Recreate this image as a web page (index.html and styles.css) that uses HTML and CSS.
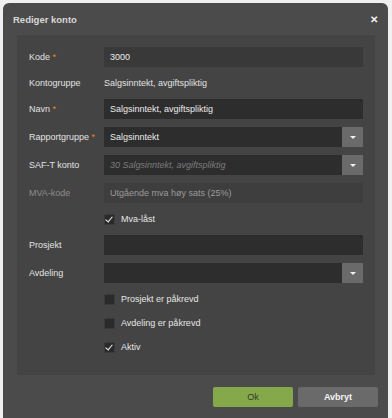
FILE: index.html
```html
<!DOCTYPE html>
<html lang="nb">
<head>
    <meta charset="UTF-8">
    <meta name="viewport" content="width=device-width, initial-scale=1.0">
    <title>Rediger konto</title>
    <link rel="stylesheet" href="styles.css">
</head>
<body>
    <div class="dialog">
        <header class="dialog-header">
            <h1>Rediger konto</h1>
            <span class="close">&#10005;</span>
        </header>
        <div class="panel">
            <div class="row">
                <label>Kode <span class="req">*</span></label>
                <div class="field readonly">3000</div>
            </div>
            <div class="row short">
                <label>Kontogruppe</label>
                <div class="value">Salgsinntekt, avgiftspliktig</div>
            </div>
            <div class="row">
                <label>Navn <span class="req">*</span></label>
                <div class="field">Salgsinntekt, avgiftspliktig</div>
            </div>
            <div class="row">
                <label>Rapportgruppe <span class="req">*</span></label>
                <div class="select">
                    <div class="field">Salgsinntekt</div>
                    <span class="caret"></span>
                </div>
            </div>
            <div class="row">
                <label>SAF-T konto</label>
                <div class="select">
                    <div class="field placeholder">30 Salgsinntekt, avgiftspliktig</div>
                    <span class="caret"></span>
                </div>
            </div>
            <div class="row">
                <label class="dim">MVA-kode</label>
                <div class="field disabled">Utgående mva høy sats (25%)</div>
            </div>
            <div class="row short">
                <label></label>
                <div class="check"><span class="box checked"></span>Mva-låst</div>
            </div>
            <div class="row">
                <label>Prosjekt</label>
                <div class="field"></div>
            </div>
            <div class="row">
                <label>Avdeling</label>
                <div class="select">
                    <div class="field"></div>
                    <span class="caret"></span>
                </div>
            </div>
            <div class="row short">
                <label></label>
                <div class="check"><span class="box"></span>Prosjekt er påkrevd</div>
            </div>
            <div class="row short">
                <label></label>
                <div class="check"><span class="box"></span>Avdeling er påkrevd</div>
            </div>
            <div class="row short">
                <label></label>
                <div class="check"><span class="box checked"></span>Aktiv</div>
            </div>
        </div>
        <footer class="dialog-footer">
            <button class="btn ok">Ok</button>
            <button class="btn cancel">Avbryt</button>
        </footer>
    </div>
</body>
</html>
```

FILE: styles.css
```css
body {
    background-color: #f0f0f0;
    font-family: 'Liberation Sans', Arial, sans-serif;
    font-size: 9px;
    margin: 0;
    padding: 3px 4px 0 3px;
    height: 415px;
    overflow: hidden;
}
.dialog {
    background-color: #4b4b4b;
    border-radius: 6px 6px 0 0;
    height: 420px;
    padding: 0 13px 0 14px;
}
.dialog-header {
    height: 32px;
    display: flex;
    align-items: center;
    justify-content: space-between;
    margin: 0 -13px 0 -4px;
    padding-right: 10px;
}
.dialog-header h1 {
    color: #d8d8d8;
    font-size: 9.5px;
    font-weight: bold;
    margin: 0;
    padding-top: 1px;
}
.close {
    color: #f2f2f2;
    font-size: 10px;
    font-weight: bold;
}
.panel {
    background-color: #444444;
    padding: 12px 12px 20px 12px;
    display: flex;
    flex-direction: column;
    gap: 8px;
}
.row {
    display: flex;
    align-items: center;
    height: 20px;
}
.row.short {
    height: 16px;
}
.row label {
    width: 75px;
    flex-shrink: 0;
    color: #e2e2e2;
}
.row label.dim {
    color: #8c8c8c;
}
.req {
    color: #e8872a;
}
.field {
    flex: 1;
    height: 20px;
    line-height: 20px;
    background-color: #2d2d2d;
    color: #ececec;
    padding: 0 6px;
    box-sizing: border-box;
    white-space: nowrap;
    overflow: hidden;
}
.field.readonly {
    background-color: #393939;
}
.field.disabled {
    background-color: #3e3e3e;
    color: #9a9a9a;
}
.field.placeholder {
    color: #7c7c7c;
    font-style: italic;
}
.value {
    color: #e2e2e2;
}
.select {
    flex: 1;
    display: flex;
}
.caret {
    width: 21px;
    height: 20px;
    background-color: #6a6a6a;
    position: relative;
}
.caret::after {
    content: '';
    position: absolute;
    left: 8px;
    top: 9px;
    border-left: 3px solid transparent;
    border-right: 3px solid transparent;
    border-top: 3px solid #f0f0f0;
}
.check {
    display: flex;
    align-items: center;
    color: #e6e6e6;
}
.box {
    width: 9px;
    height: 9px;
    background-color: #2a2a2a;
    border: 1px solid #3a3a3a;
    margin-right: 6px;
    position: relative;
}
.box.checked::after {
    content: '';
    position: absolute;
    left: 2px;
    top: 0px;
    width: 3px;
    height: 6px;
    border-right: 1.5px solid #f4f4f4;
    border-bottom: 1.5px solid #f4f4f4;
    transform: rotate(40deg);
}
.dialog-footer {
    display: flex;
    justify-content: flex-end;
    gap: 5px;
    margin-top: 12px;
    margin-right: -3px;
}
.btn {
    width: 80px;
    height: 20px;
    border: none;
    border-radius: 2px;
    font-family: 'Liberation Sans', Arial, sans-serif;
    font-size: 9px;
    cursor: pointer;
}
.btn.ok {
    background-color: #85a84a;
    color: #2f3a1e;
}
.btn.cancel {
    background-color: #6a6a6a;
    color: #f4f4f4;
    font-weight: bold;
}
```
